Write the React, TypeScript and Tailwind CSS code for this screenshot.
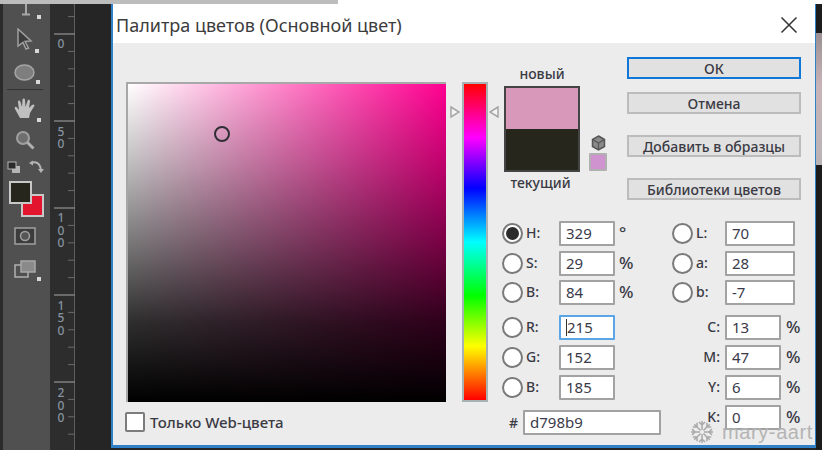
const uiFont = "font-['Noto_Sans','Open_Sans',sans-serif]"

function RulerSvg() {
  const majors = [
    { y: 34, digits: [{ t: '0', y: 48 }] },
    { y: 121, digits: [{ t: '5', y: 136 }, { t: '0', y: 148 }] },
    { y: 208, digits: [{ t: '1', y: 222 }, { t: '0', y: 235 }, { t: '0', y: 247 }] },
    { y: 295, digits: [{ t: '1', y: 310 }, { t: '5', y: 322 }, { t: '0', y: 335 }] },
    { y: 382, digits: [{ t: '2', y: 397 }, { t: '0', y: 410 }, { t: '0', y: 422 }] },
  ]
  const ticks = Array.from({ length: 26 }, (_, i) => 17.4 * i - 0.8)
  return (
    <svg width="25" height="446" viewBox="0 4 25 446" className="block">
      <g transform="translate(-50 0)">
        <line x1="74.5" y1="4" x2="74.5" y2="450" stroke="#5e5e5e" />
        {ticks.map((y, i) => (
          <line key={i} x1={i % 5 === 2 ? 54 : 68} y1={y} x2="75" y2={y} stroke="#6a6a6a" />
        ))}
        {majors.map((m) => (
          <g key={m.y}>
            <line x1="54" y1={m.y} x2="75" y2={m.y} stroke="#8a8a8a" />
            {m.digits.map((d, i) => (
              <text key={i} x="61" y={d.y} textAnchor="middle" fontSize="12" fontWeight="500" fontFamily="Noto Sans, sans-serif" fill="#85929f">
                {d.t}
              </text>
            ))}
          </g>
        ))}
      </g>
    </svg>
  )
}

function Corner() {
  return <span className="absolute right-[-5px] bottom-[-3px] w-[4px] h-[4px] bg-[#d8d8d8]" />
}

function Toolbar() {
  return (
    <div className="w-[50px] h-full bg-[#505050] border-l-[3px] border-[#2b2b2b] flex flex-col items-center">
      <div className="relative h-[12px] w-[20px] -ml-[2px] mt-0">
        <svg width="20" height="12" viewBox="0 0 20 12">
          <path d="M10 0v10M6 10.5h8" stroke="#a8a8a8" strokeWidth="2" fill="none" />
        </svg>
        <Corner />
      </div>
      <div className="relative mt-[12px] -ml-[3px]">
        <svg width="18" height="22" viewBox="0 0 18 22" className="block">
          <path d="M2 1l13 12-6 .5 3.5 6.5-2.5 1-3-6.500L2 18z" fill="#3c3c3c" stroke="#a0a0a0" strokeWidth="1.500" />
        </svg>
        <Corner />
      </div>
      <div className="relative mt-[14px] -ml-[4px]">
        <svg width="21" height="17" viewBox="0 0 21 17" className="block">
          <ellipse cx="10.500" cy="8.500" rx="9.500" ry="7.500" fill="#7e7e7e" stroke="#a5a5a5" strokeWidth="1.500" />
        </svg>
        <Corner />
      </div>
      <div className="w-[36px] h-px bg-[#333333] mt-[8px] -ml-[3px]" />
      <div className="relative mt-[8px] -ml-[3px]">
        <svg width="22" height="21" viewBox="0 0 22 21" className="block">
          <path d="M6 20L1 11c-1-2 1-3 2-1.500L5 12 4 4c0-2 2-2 2.500 0L8 9 8.500 2c0-2 2.500-2 2.500 0l.5 7L13.500 3c.5-2 2.500-1.500 2.500 .5L15 10l3-3c1.500-1.500 3.500 0 2 1.500L16 15l-1 5z" fill="#c0c0c0" />
        </svg>
        <Corner />
      </div>
      <svg width="20" height="20" viewBox="0 0 20 20" className="block mt-[11px] -ml-[3px]">
        <circle cx="8" cy="8" r="6" fill="#6f6f6f" stroke="#a0a0a0" strokeWidth="2" />
        <path d="M12.500 12.500L18.500 18.500" stroke="#b0b0b0" strokeWidth="3" />
      </svg>
      <div className="flex w-full mt-[11px] pl-[4px] items-start">
        <svg width="14" height="13" viewBox="0 0 14 13" className="block">
          <rect x="5" y="5" width="8" height="7" fill="#b5b5b5" />
          <rect x="1" y="1" width="8" height="7" fill="#2a2a2a" stroke="#b5b5b5" />
        </svg>
        <svg width="15" height="14" viewBox="0 0 15 14" className="block ml-[8px] -mt-[1px]">
          <path d="M2 3c5-2 9 0 10 7" stroke="#b5b5b5" strokeWidth="2" fill="none" />
          <path d="M0 3l4-2.500v5zM9 9h6l-3 4z" fill="#b5b5b5" />
        </svg>
      </div>
      <div className="relative w-full h-[36px] mt-[7px]">
        <div className="absolute left-[18px] top-[13px] w-[23px] h-[23px] bg-[#e3152e] border-2 border-[#c8c8c8]" />
        <div className="absolute left-[6px] top-0 w-[23px] h-[23px] bg-[#26261c] border-2 border-[#c8c8c8]" />
      </div>
      <svg width="22" height="18" viewBox="0 0 22 18" className="block mt-[10px] -ml-[3px]">
        <rect x="1" y="1" width="20" height="16" fill="#3c3c3c" stroke="#a0a0a0" strokeWidth="1.500" />
        <circle cx="11" cy="9" r="4.500" fill="#555555" stroke="#a0a0a0" strokeWidth="1.500" />
      </svg>
      <div className="relative mt-[15px] -ml-[3px]">
        <svg width="22" height="18" viewBox="0 0 22 18" className="block">
          <rect x="1" y="5" width="13" height="12" fill="#505050" stroke="#b0b0b0" strokeWidth="1.500" />
          <rect x="7" y="1" width="14" height="11" fill="#8a8a8a" stroke="#a8a8a8" strokeWidth="1.500" />
        </svg>
        <Corner />
      </div>
    </div>
  )
}

function Field({ value, className, caret }: { value: string; className: string; caret?: boolean }) {
  return (
    <div
      className={`h-[25px] bg-white border-2 rounded-[1px] flex items-center pl-[5px] text-[15px] text-[#3a3a4a] ${
        caret ? 'border-[#5aa5e6]' : 'border-[#a2a2a2]'
      } ${className}`}
    >
      {caret && <span className="w-px h-[17px] bg-[#333333]" />}
      {value}
    </div>
  )
}

function Radio({ checked }: { checked?: boolean }) {
  return (
    <span className="w-[21px] h-[21px] shrink-0 rounded-full border-2 border-[#7a7a7a] bg-white flex items-center justify-center">
      {checked && <span className="w-[13px] h-[13px] rounded-full bg-[#2b2b2b]" />}
    </span>
  )
}

function ModeRow({ label, value, unit, checked, wide, caret, className = '' }: {
  label: string
  value: string
  unit?: string
  checked?: boolean
  wide?: boolean
  caret?: boolean
  className?: string
}) {
  return (
    <div className={`flex items-center h-[25px] ${className}`}>
      <Radio checked={checked} />
      <span className={`font-medium text-[14px] text-[#3a3a44] ml-[3px] -mt-[3px] ${wide ? 'w-[29px]' : 'w-[33px]'}`}>{label}</span>
      <Field value={value} caret={caret} className={wide ? 'w-[70px]' : 'w-[56px]'} />
      {unit && <span className="ml-[4px] text-[17px] text-[#3a3a44] font-medium -mt-[1px]">{unit}</span>}
    </div>
  )
}

function CmykRow({ label, value, className = '' }: { label: string; value: string; className?: string }) {
  return (
    <div className={`flex items-center h-[25px] ${className}`}>
      <span className="w-[48px] text-right font-medium text-[14px] text-[#3a3a44] -mt-[2px]">{label}</span>
      <Field value={value} className="w-[56px] ml-[5px]" />
      <span className="ml-[5px] text-[17px] text-[#3a3a44] font-medium -mt-[2px]">%</span>
    </div>
  )
}

function DlgButton({ label, primary, className = '' }: { label: string; primary?: boolean; className?: string }) {
  return (
    <div
      className={`h-[22px] w-[174px] bg-[#e1e1e1] flex items-center justify-center text-[14px] font-medium text-[#3a3a44] ${
        primary ? 'border-2 border-[#0f77d8]' : 'border-2 border-[#bcbcbc]'
      } ${className}`}
    >
      {label}
    </div>
  )
}

function Dialog() {
  return (
    <div className={`relative w-[705px] h-[444px] border-l-2 border-r border-b-[3px] border-[#2f80c6] bg-[#ececec] flex flex-col ${uiFont}`}>
      <div className="h-[39px] shrink-0 bg-white flex items-center justify-between pl-[3px] pr-[17px]">
        <span className="text-[18px] text-[#3c3c3c] mt-[3px]">Палитра цветов (Основной цвет)</span>
        <svg width="18" height="18" viewBox="0 0 18 18" className="block mt-[3px]">
          <path d="M1.500 1.500l15 15M16.500 1.500l-15 15" stroke="#333333" strokeWidth="1.500" />
        </svg>
      </div>

      <div className="flex pl-[13px] pt-[14px]">
        <div className="w-[320px] shrink-0 pt-[25px]">
          <div className="relative h-[320px] border-t-2 border-l-2 border-[#a8a8a8] bg-[linear-gradient(to_bottom,rgba(0,0,0,0),rgba(0,0,0,0.25)_25%,rgba(0,0,0,0.53)_50%,rgba(0,0,0,0.82)_75%,#000),linear-gradient(to_right,#fff,#ff0090)]">
            <span className="absolute left-[86px] top-[42px] w-[16px] h-[16px] rounded-full border-2 border-[#2f2f35]" />
          </div>
          <div className="flex items-center mt-[9px]">
            <span className="w-[20px] h-[20px] -ml-[1px] bg-white border-2 border-[#7c7c7c] rounded-[2px]" />
            <span className="ml-[5px] text-[15px] font-medium text-[#3a3a44]">Только Web-цвета</span>
          </div>
        </div>

        <div className="relative w-[26px] shrink-0 ml-[16px] mt-[25px] h-[320px] border-2 border-[#a9b2b2] bg-[linear-gradient(to_bottom,#f00,#f0f_17%,#00f_33%,#0ff_50%,#0f0_67%,#ff0_83%,#f00)]">
          <svg width="10" height="12" viewBox="0 0 10 12" className="absolute left-[-14px] top-[22px]">
            <path d="M1 1l8 5-8 5z" fill="#f4f4f4" stroke="#a5a5a5" strokeWidth="1.500" />
          </svg>
          <svg width="10" height="12" viewBox="0 0 10 12" className="absolute right-[-13px] top-[22px]">
            <path d="M9 1L1 6l8 5z" fill="#f4f4f4" stroke="#a5a5a5" strokeWidth="1.500" />
          </svg>
        </div>

        <div className="w-[299px] shrink-0 ml-[14px]">
          <div className="flex h-[164px]">
            <div className="w-[78px] ml-[1px] flex flex-col items-center">
              <span className="text-[14px] font-medium text-[#3a3a44] mt-[7px] leading-[20px]">новый</span>
              <div className="w-[76px] h-[86px] mt-[2px] border-2 border-[#444444] flex flex-col">
                <div className="flex-1 bg-[#d798b9]" />
                <div className="flex-1 bg-[#26261c]" />
              </div>
              <span className="text-[14px] font-medium text-[#3a3a44] mt-[1px] leading-[20px] -ml-[3px]">текущий</span>
            </div>
            <div className="w-[18px] ml-[8px] mt-[78px] flex flex-col items-center">
              <svg width="15" height="16" viewBox="0 0 15 16" className="block">
                <path d="M7.500 1l6 3.500v7l-6 3.500-6-3.500v-7z" fill="#8a8a8a" stroke="#555555" strokeWidth="1.500" />
                <path d="M1.500 4.500l6 3.500 6-3.500M7.500 8v7" stroke="#555555" strokeWidth="1.200" fill="none" />
              </svg>
              <span className="w-[18px] h-[18px] mt-[2px] border-2 border-[#b0b0b0] bg-[#cf93cf] rounded-[1px]" />
            </div>
            <div className="ml-[20px] flex flex-col">
              <DlgButton label="ОК" primary />
              <DlgButton label="Отмена" className="mt-[13px]" />
              <DlgButton label="Добавить в образцы" className="mt-[21px]" />
              <DlgButton label="Библиотеки цветов" className="mt-[21px]" />
            </div>
          </div>

          <div className="flex">
            <div className="w-[170px] shrink-0">
              <ModeRow label="H:" value="329" unit="°" checked />
              <ModeRow label="S:" value="29" unit="%" className="mt-[5px]" />
              <ModeRow label="B:" value="84" unit="%" className="mt-[4px]" />
              <ModeRow label="R:" value="215" caret className="mt-[10px]" />
              <ModeRow label="G:" value="152" className="mt-[5px]" />
              <ModeRow label="B:" value="185" className="mt-[5px]" />
              <div className="flex items-center h-[25px] mt-[10px] pl-[7px]">
                <span className="w-[14px] text-[14px] font-medium text-[#3a3a44]">#</span>
                <Field value="d798b9" className="w-[138px]" />
              </div>
            </div>
            <div className="flex-1">
              <ModeRow label="L:" value="70" wide />
              <ModeRow label="a:" value="28" wide className="mt-[5px]" />
              <ModeRow label="b:" value="-7" wide className="mt-[4px]" />
              <CmykRow label="C:" value="13" className="mt-[10px]" />
              <CmykRow label="M:" value="47" className="mt-[5px]" />
              <CmykRow label="Y:" value="6" className="mt-[5px]" />
              <CmykRow label="K:" value="0" className="mt-[5px]" />
            </div>
          </div>
        </div>
      </div>

      <div className="absolute right-[2px] bottom-[1px] flex items-center">
        <svg width="24" height="24" viewBox="-12 -12 24 24" className="block">
          {[0, 45, 90, 135, 180, 225, 270, 315].map((a) => (
            <g key={a} transform={`rotate(${a})`}>
              <path d="M0-2V-11M0-7l-3-3M0-7l3-3" stroke="#a9a9a9" strokeWidth="1.500" fill="none" />
            </g>
          ))}
        </svg>
        <span className="ml-[8px] text-[20px] leading-[24px] tracking-[0.6px] text-[#b4b4b4] font-['Liberation_Sans',sans-serif]">mary-aart</span>
      </div>
    </div>
  )
}

export default function App() {
  return (
    <div className="w-[822px] h-[450px] overflow-hidden bg-[#252525] flex flex-col">
      <div className="h-[4px] shrink-0 flex bg-white">
        <div className="w-[338px] bg-[#bdbdbd]" />
      </div>
      <div className="flex flex-1 min-h-0">
        <Toolbar />
        <div className="w-[25px] shrink-0 bg-[#2d2d2d]">
          <RulerSvg />
        </div>
        <div className="w-[36px] shrink-0" />
        <Dialog />
        <div className="flex-1 flex flex-col">
          <div className="h-[29px] bg-[#1c1c1c]" />
          <div className="h-[132px] bg-[linear-gradient(to_bottom,#9a8f92,#c8b4b8_40%,#b9b3b6)]" />
          <div className="flex-1 bg-[#1c1c1c]" />
        </div>
      </div>
    </div>
  )
}
